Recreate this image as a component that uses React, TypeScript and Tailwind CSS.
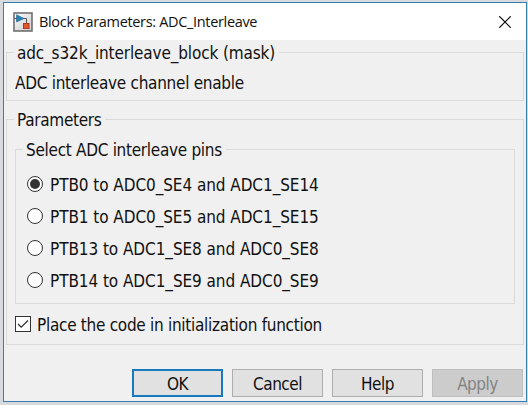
import { useState, type ReactNode } from "react";

const pins = [
  "PTB0 to ADC0_SE4 and ADC1_SE14",
  "PTB1 to ADC0_SE5 and ADC1_SE15",
  "PTB13 to ADC1_SE8 and ADC0_SE8",
  "PTB14 to ADC1_SE9 and ADC0_SE9",
];

function Group({ title, titleClass, className, children }: { title: ReactNode; titleClass: string; className: string; children: ReactNode }) {
  return (
    <section className={`border border-[#dadada] ${className}`}>
      <h2 className={`-mt-[10px] ml-[7px] h-[20px] w-fit whitespace-nowrap bg-[#f0f0f0] pl-[3px] pr-[4px] leading-[20px] ${titleClass}`}>{title}</h2>
      {children}
    </section>
  );
}

function BlockIcon() {
  return (
    <svg width="20" height="20" viewBox="0 0 20 20" className="shrink-0">
      <defs>
        <linearGradient id="tile" x1="0" y1="0" x2="1" y2="1">
          <stop offset="0" stopColor="#fff" />
          <stop offset="1" stopColor="#c8c8c8" />
        </linearGradient>
      </defs>
      <rect x="1" y="1" width="18" height="18" fill="url(#tile)" stroke="#707070" strokeWidth="1.6" />
      <path d="M1.5 6.5H4M10 6.5h3.5V11" fill="none" stroke="#555" strokeWidth="1" />
      <path d="M3.5 2.8 11 6.5 3.5 10Z" fill="#2383b5" stroke="#22638c" strokeWidth=".6" />
      <rect x="10.5" y="11.5" width="5.5" height="5" fill="#e6562d" stroke="#a83b20" />
    </svg>
  );
}

export default function App() {
  const [selected, setSelected] = useState(0);
  const [checked, setChecked] = useState(true);
  const button = "flex h-[28px] w-[91px] items-center justify-center pt-[2px] leading-[20px]";
  return (
    <main className="h-[405px] w-[528px] overflow-hidden bg-[#d8dadd] pl-[3px] pt-[2px]">
      <div className="flex h-[400px] w-[524px] flex-col border border-[#387cb4] bg-[#f0f0f0] font-['DejaVu_Sans_Condensed','DejaVu_Sans',sans-serif] text-[17px] tracking-[-0.28px] text-[#111] [font-stretch:condensed]">
        <header className="flex h-[37px] shrink-0 items-center bg-white pl-[9px] pr-[15px]">
          <BlockIcon />
          <h1 className="ml-[6px] whitespace-nowrap font-['Open_Sans',sans-serif] text-[14.5px] tracking-[-0.33px] [font-stretch:normal]">Block Parameters: ADC_Interleave</h1>
          <button aria-label="Close" className="ml-auto">
            <svg width="12" height="12" viewBox="0 0 12 12"><path d="m.3.3 11.4 11.4m0-11.4L.3 11.7" stroke="#000" strokeWidth="1.2" /></svg>
          </button>
        </header>
        <div className="pl-[2px] pt-[12px]">
          <Group title="adc_s32k_interleave_block (mask)" titleClass="tracking-[-0.13px]" className="h-[49px] w-[518px]">
            <p className="mt-[10px] whitespace-nowrap pl-[8px] leading-[20px]">ADC interleave channel enable</p>
          </Group>
          <Group title="Parameters" titleClass="tracking-[-0.3px]" className="mt-[18px] h-[226px] w-[518px]">
            <Group title="Select ADC interleave pins" titleClass="tracking-[-0.29px]" className="ml-[8px] mt-[19px] h-[155px] w-[500px]">
              <div className="mt-[8px] flex flex-col pl-[11px] tracking-[-0.07px]">
                {pins.map((pin, index) => (
                  <button key={pin} role="radio" aria-checked={selected === index} onClick={() => setSelected(index)} className="flex h-[32px] items-center text-left">
                    <span className="flex size-[16px] shrink-0 items-center justify-center rounded-full border border-[#333] bg-white">
                      {selected === index && <span className="size-[10px] rounded-full bg-[#333]" />}
                    </span>
                    <span className="ml-[7px] whitespace-nowrap pt-[2px] leading-[20px]">{pin}</span>
                  </button>
                ))}
              </div>
            </Group>
            <button role="checkbox" aria-checked={checked} onClick={() => setChecked(!checked)} className="ml-[8px] mt-[10px] flex h-[20px] items-center">
              <span className="flex size-[16px] items-center justify-center border border-[#333] bg-white">
                {checked && <svg width="14" height="14" viewBox="0 0 14 14" className="shrink-0"><path d="m2 7 3.2 3.2L12 3.5" fill="none" stroke="#333" strokeWidth="1.3" /></svg>}
              </span>
              <span className="ml-[6px] whitespace-nowrap pt-[2px] leading-[20px]">Place the code in initialization function</span>
            </button>
          </Group>
        </div>
        <footer className="mt-[24px] flex gap-[9px] pl-[128px] tracking-[-0.5px]">
          <button className={`${button} border-2 border-[#1979bd] bg-[#e1e1e1]`}>OK</button>
          <button className={`${button} border border-[#adadad] bg-[#e1e1e1]`}>Cancel</button>
          <button className={`${button} border border-[#adadad] bg-[#e1e1e1]`}>Help</button>
          <button className={`${button} border border-[#bfbfbf] bg-[#cccccc] text-[#838383]`}>Apply</button>
        </footer>
      </div>
    </main>
  );
}
